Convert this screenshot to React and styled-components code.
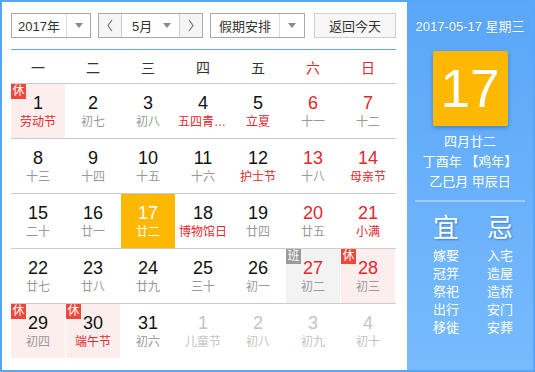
import React from 'react'
import styled, { createGlobalStyle } from 'styled-components'

const GlobalStyle = createGlobalStyle`
  body {
    margin: 0;
    font-family: "Liberation Sans", "Noto Sans CJK SC", sans-serif;
  }
`

const RED = '#e5262d'

const Frame = styled.div`
  width: 535px;
  height: 372px;
  box-sizing: border-box;
  border: 2px solid #5aa6f6;
  display: flex;
  background: #fff;
`

const Left = styled.div`
  width: 405px;
  box-sizing: border-box;
  padding: 11px 11px 0 9px;
`

const Toolbar = styled.div`
  display: flex;
  height: 25px;
`

const SelectBox = styled.div`
  display: flex;
  width: ${p => p.$w}px;
  height: 25px;
  box-sizing: border-box;
  border: 1px solid #a8a8a8;
  background: #fff;
  margin-right: ${p => p.$mr || 0}px;
`

const SelectText = styled.div`
  flex: 1;
  display: flex;
  align-items: center;
  justify-content: center;
  font-size: 13px;
  color: #333;
`

const ArrowCell = styled.div`
  width: ${p => p.$w}px;
  border-left: 1px solid #dcdcdc;
  display: flex;
  align-items: center;
  justify-content: center;
`

const Caret = styled.span`
  width: 0;
  height: 0;
  border-left: 4px solid transparent;
  border-right: 4px solid transparent;
  border-top: 5px solid #8a8a8a;
`

const StepBtn = styled.div`
  width: 22px;
  background: #f5f5f5;
  display: flex;
  align-items: center;
  justify-content: center;
  border-${p => (p.$side === 'left' ? 'right' : 'left')}: 1px solid #d0d0d0;
`

const MonthMid = styled.div`
  flex: 1;
  display: flex;
  align-items: center;
  padding: 0 8px 0 10px;
  font-size: 13px;
  color: #333;
  justify-content: space-between;
`

const TodayBtn = styled.div`
  width: 82px;
  height: 25px;
  box-sizing: border-box;
  border: 1px solid #cfcfcf;
  background: #f7f7f7;
  display: flex;
  align-items: center;
  justify-content: center;
  font-size: 13px;
  color: #333;
`

const WeekHeader = styled.div`
  margin-top: 11px;
  border-top: 1px solid #5ea6f3;
  height: 33px;
  display: grid;
  grid-template-columns: repeat(7, 54px);
  column-gap: 1px;
  align-items: center;
`

const WeekDay = styled.div`
  text-align: center;
  font-size: 14px;
  color: ${p => (p.$red ? RED : '#333')};
`

const Row = styled.div`
  border-top: 1px solid #cccccc;
  display: grid;
  grid-template-columns: repeat(7, 54px);
  column-gap: 1px;
  height: 54px;
`

const Cell = styled.div`
  position: relative;
  height: 54px;
  box-sizing: border-box;
  padding-top: 9px;
  text-align: center;
  background: ${p => p.$bg || 'transparent'};
`

const Num = styled.div`
  font-size: 18px;
  line-height: 20px;
  color: ${p => p.$color};
`

const Lunar = styled.div`
  font-size: 12px;
  line-height: 18px;
  padding: 0 2px;
  white-space: nowrap;
  overflow: hidden;
  text-overflow: ellipsis;
  color: ${p => p.$color};
`

const Badge = styled.span`
  position: absolute;
  top: 0;
  left: 0;
  width: 15px;
  height: 15px;
  line-height: 15px;
  font-size: 12px;
  color: #fff;
  text-align: center;
  background: ${p => (p.$work ? '#9a9a9a' : '#f1473b')};
`

const Panel = styled.div`
  flex: 1;
  padding-top: 16px;
  display: flex;
  flex-direction: column;
  align-items: center;
  color: #fff;
  background: linear-gradient(#5aa6f8, #77bbfd);
`

const DateLine = styled.div`
  font-size: 13px;
  line-height: 18px;
  text-shadow: 0 0 1px rgba(0, 60, 140, 0.3);
`

const BigDay = styled.div`
  margin-top: 15px;
  width: 75px;
  height: 75px;
  border-radius: 2px;
  background: #ffb800;
  box-shadow: 0 2px 4px rgba(0, 40, 100, 0.3);
  display: flex;
  align-items: center;
  justify-content: center;
  font-size: 53px;
`

const LunarInfo = styled.div`
  margin-top: 6px;
  font-size: 13px;
  line-height: 20px;
  text-align: center;
`

const Divider = styled.div`
  margin-top: 8px;
  width: 110px;
  height: 2px;
  background: rgba(255, 255, 255, 0.35);
`

const YiJi = styled.div`
  margin-top: 11px;
  padding-left: 6px;
  display: grid;
  grid-template-columns: 54px 54px;
  text-align: center;
`

const YiJiHead = styled.div`
  font-size: 26px;
  line-height: 30px;
  text-shadow: 1px 1px 2px rgba(0, 50, 120, 0.45);
`

const YiJiList = styled.div`
  margin-top: 4px;
  font-size: 13px;
  line-height: 18px;
`

const Chevron = ({ dir }) => (
  <svg width="8" height="13" viewBox="0 0 8 13">
    <polyline
      points={dir === 'left' ? '6,1 2,6.5 6,12' : '2,1 6,6.5 2,12'}
      fill="none"
      stroke="#777"
      strokeWidth="1.2"
    />
  </svg>
)

// [day, lunar, flags]  r: red number, f: red lunar/festival, h: 休, w: 班, o: other month, t: today
const weeks = [
  [[1, '劳动节', 'hf'], [2, '初七'], [3, '初八'], [4, '五四青年节', 'f'], [5, '立夏', 'f'], [6, '十一', 'r'], [7, '十二', 'r']],
  [[8, '十三'], [9, '十四'], [10, '十五'], [11, '十六'], [12, '护士节', 'f'], [13, '十八', 'r'], [14, '母亲节', 'rf']],
  [[15, '二十'], [16, '廿一'], [17, '廿二', 't'], [18, '博物馆日', 'f'], [19, '廿四'], [20, '廿五', 'r'], [21, '小满', 'rf']],
  [[22, '廿七'], [23, '廿八'], [24, '廿九'], [25, '三十'], [26, '初一'], [27, '初二', 'wr'], [28, '初三', 'hr']],
  [[29, '初四', 'h'], [30, '端午节', 'hf'], [31, '初六'], [1, '儿童节', 'o'], [2, '初八', 'o'], [3, '初九', 'o'], [4, '初十', 'o']],
]

const DayCell = ({ day, lunar, flags = '' }) => {
  const has = c => flags.includes(c)
  let bg
  if (has('h')) bg = '#fdeeee'
  if (has('w')) bg = '#f3f3f3'
  if (has('t')) bg = '#ffb800'
  let numColor = has('r') ? RED : '#111'
  let lunarColor = has('f') ? RED : '#999'
  if (has('o')) {
    numColor = '#c4c4c4'
    lunarColor = '#c4c4c4'
  }
  if (has('t')) {
    numColor = '#fff'
    lunarColor = '#fff'
  }
  return (
    <Cell $bg={bg}>
      {has('h') && <Badge>休</Badge>}
      {has('w') && <Badge $work>班</Badge>}
      <Num $color={numColor}>{day}</Num>
      <Lunar $color={lunarColor}>{lunar}</Lunar>
    </Cell>
  )
}

const App = () => {
  return (
    <Frame>
      <GlobalStyle />
      <Left>
        <Toolbar>
          <SelectBox $w={80} $mr={7}>
            <SelectText>2017年</SelectText>
            <ArrowCell $w={23}><Caret /></ArrowCell>
          </SelectBox>
          <SelectBox $w={105} $mr={7}>
            <StepBtn $side="left"><Chevron dir="left" /></StepBtn>
            <MonthMid>5月<Caret /></MonthMid>
            <StepBtn $side="right"><Chevron dir="right" /></StepBtn>
          </SelectBox>
          <SelectBox $w={95} $mr={9}>
            <SelectText>假期安排</SelectText>
            <ArrowCell $w={24}><Caret /></ArrowCell>
          </SelectBox>
          <TodayBtn>返回今天</TodayBtn>
        </Toolbar>

        <WeekHeader>
          {['一', '二', '三', '四', '五', '六', '日'].map((d, i) => (
            <WeekDay key={d} $red={i > 4}>{d}</WeekDay>
          ))}
        </WeekHeader>

        {weeks.map((week, i) => (
          <Row key={i}>
            {week.map(([day, lunar, flags], j) => (
              <DayCell key={j} day={day} lunar={lunar} flags={flags} />
            ))}
          </Row>
        ))}
      </Left>

      <Panel>
        <DateLine>2017-05-17 星期三</DateLine>
        <BigDay>17</BigDay>
        <LunarInfo>
          <div>四月廿二</div>
          <div>丁酉年 【鸡年】</div>
          <div>乙巳月 甲辰日</div>
        </LunarInfo>
        <Divider />
        <YiJi>
          <div>
            <YiJiHead>宜</YiJiHead>
            <YiJiList>
              <div>嫁娶</div>
              <div>冠笄</div>
              <div>祭祀</div>
              <div>出行</div>
              <div>移徙</div>
            </YiJiList>
          </div>
          <div>
            <YiJiHead>忌</YiJiHead>
            <YiJiList>
              <div>入宅</div>
              <div>造屋</div>
              <div>造桥</div>
              <div>安门</div>
              <div>安葬</div>
            </YiJiList>
          </div>
        </YiJi>
      </Panel>
    </Frame>
  )
}

export default App
